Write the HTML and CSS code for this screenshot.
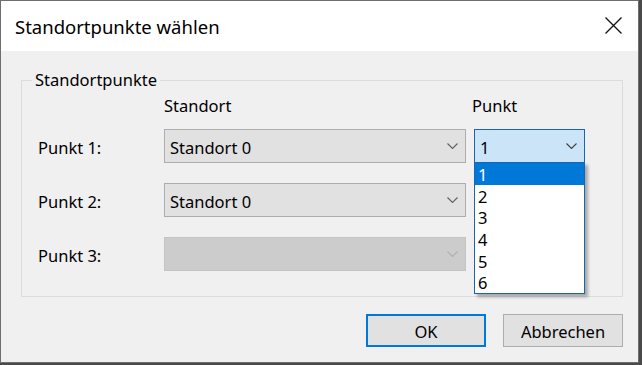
FILE: index.html
```html
<!doctype html>
<html lang="de">
	<head>
		<title>Standortpunkte wählen</title>
		<meta charset="utf-8" />
		<link rel="stylesheet" href="styles.css">
	</head>

	<body>
		<div class="dialog">
			<div class="titlebar">
				<span class="title">Standortpunkte wählen</span>
				<svg class="close" width="17" height="17" viewBox="0 0 17 17">
					<path d="M0.5 0.5 L16.5 16.5 M16.5 0.5 L0.5 16.5" stroke="#111" stroke-width="1.3" fill="none" />
				</svg>
			</div>

			<div class="content">
				<fieldset class="group">
					<legend>Standortpunkte</legend>

					<div class="cols head">
						<span></span>
						<span>Standort</span>
						<span class="head-punkt">Punkt</span>
					</div>

					<div class="cols row">
						<span class="label">Punkt 1:</span>
						<div class="combo">
							<span class="value">Standort 0</span>
							<svg class="chevron" width="11" height="6" viewBox="0 0 11 6"><path d="M0.5 0.5 L5.5 5.5 L10.5 0.5" /></svg>
						</div>
						<div class="combo open">
							<span class="value">1</span>
							<svg class="chevron" width="11" height="6" viewBox="0 0 11 6"><path d="M0.5 0.5 L5.5 5.5 L10.5 0.5" /></svg>
							<ul class="droplist">
								<li class="selected">1</li>
								<li>2</li>
								<li>3</li>
								<li>4</li>
								<li>5</li>
								<li>6</li>
							</ul>
						</div>
					</div>

					<div class="cols row">
						<span class="label">Punkt 2:</span>
						<div class="combo">
							<span class="value">Standort 0</span>
							<svg class="chevron" width="11" height="6" viewBox="0 0 11 6"><path d="M0.5 0.5 L5.5 5.5 L10.5 0.5" /></svg>
						</div>
						<span></span>
					</div>

					<div class="cols row">
						<span class="label">Punkt 3:</span>
						<div class="combo disabled">
							<span class="value"></span>
							<svg class="chevron" width="11" height="6" viewBox="0 0 11 6"><path d="M0.5 0.5 L5.5 5.5 L10.5 0.5" /></svg>
						</div>
						<span></span>
					</div>
				</fieldset>

				<div class="buttons">
					<button class="btn default">OK</button>
					<button class="btn">Abbrechen</button>
				</div>
			</div>
		</div>
	</body>
</html>
```

FILE: styles.css
```css
html, body {
	margin: 0;
	padding: 0;
}

body {
	background: #4a4a4a;
	font-family: "Noto Sans", "Open Sans", sans-serif;
	font-size: 16.5px;
	line-height: 22px;
	color: #000;
}

.dialog {
	width: 639px;
	box-sizing: border-box;
	border: 1px solid #6e6e6e;
	background: #f0f0f0;
}

.titlebar {
	height: 50px;
	background: #fff;
	display: flex;
	align-items: center;
	justify-content: space-between;
	padding: 0 16px 0 14px;
}

.title {
	font-size: 18.5px;
	line-height: 26px;
	padding-top: 2px;
}

.close {
	margin-top: -1px;
}

.content {
	padding: 18px 15px 15px 20px;
}

/* group box */
.group {
	margin: 0;
	padding: 4px 0 25px 0;
	border: 1px solid #dcdcdc;
	min-width: 0;
}

.group legend {
	margin-left: 10px;
	padding: 0 3px;
	line-height: 22px;
}

.cols {
	display: grid;
	grid-template-columns: 118px 302px 111px;
	column-gap: 8px;
	align-items: center;
	padding-left: 16px;
}

.head {
	margin-bottom: 12px;
}

.head-punkt {
	margin-left: -2px;
}

.row + .row {
	margin-top: 20px;
}

.label,
.combo .value {
	padding-top: 3px;
}

/* combo boxes */
.combo {
	position: relative;
	height: 34px;
	box-sizing: border-box;
	display: flex;
	align-items: center;
	justify-content: space-between;
	padding: 0 7px 0 5px;
	background: #e1e1e1;
	border: 1px solid #adadad;
}

.chevron path {
	fill: none;
	stroke: #606060;
	stroke-width: 1.1;
}

.combo.open {
	background: #cce4f7;
	border-color: #1a64b4;
	z-index: 2;
}

.combo.open .chevron path {
	stroke: #404040;
}

.combo.disabled {
	background: #cccccc;
	border-color: #c4c4c4;
}

.combo.disabled .chevron path {
	stroke: #b0b0b0;
}

.droplist {
	position: absolute;
	top: 100%;
	left: -1px;
	right: -1px;
	margin: 0;
	padding: 0;
	list-style: none;
	background: #fff;
	border: 1px solid #1a64b4;
	box-shadow: 3px 3px 3px rgba(0, 0, 0, 0.3);
}

.droplist li {
	height: 21.67px;
	box-sizing: border-box;
	padding: 3px 0 0 3px;
	line-height: 18.67px;
}

.droplist li.selected {
	background: #0078d7;
	color: #fff;
}

/* buttons */
.buttons {
	display: flex;
	justify-content: flex-end;
	gap: 17px;
	margin-top: 17px;
}

.btn {
	width: 120px;
	height: 33px;
	box-sizing: border-box;
	padding: 3px 0 0 0;
	font: inherit;
	color: #000;
	background: #e1e1e1;
	border: 1px solid #adadad;
}

.btn.default {
	border: 2px solid #0078d7;
}
```
